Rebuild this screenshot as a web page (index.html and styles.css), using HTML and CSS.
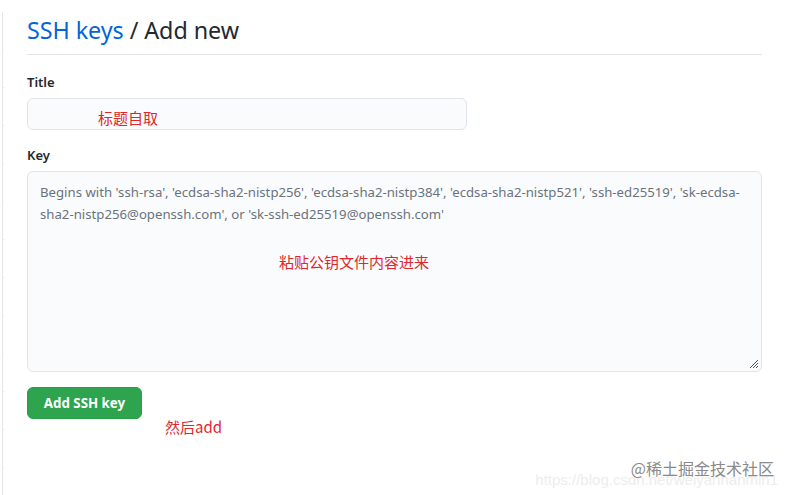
FILE: index.html
```html
<!DOCTYPE html>
<html>
<head>
<meta charset="utf-8">
<link rel="stylesheet" href="styles.css">
</head>
<body>
<div class="rail"></div>
<main class="page">
  <h1 class="heading"><a class="crumb">SSH keys</a> / Add new</h1>
  <form class="form">
    <div class="field">
      <label class="label">Title</label>
      <div class="input"><span class="note note-title">标题自取</span></div>
    </div>
    <div class="field">
      <label class="label">Key</label>
      <div class="textarea">
        <p class="placeholder">Begins with 'ssh-rsa', 'ecdsa-sha2-nistp256', 'ecdsa-sha2-nistp384', 'ecdsa-sha2-nistp521', 'ssh-ed25519', 'sk-ecdsa-sha2-nistp256@openssh.com', or 'sk-ssh-ed25519@openssh.com'</p>
        <p class="note note-key">粘贴公钥文件内容进来</p>
        <svg class="grip" width="10" height="10" viewBox="0 0 10 10"><path d="M9 1L1 9M9 4L4 9M9 7L7 9" stroke="#555" stroke-width="1" fill="none"/></svg>
      </div>
    </div>
    <div class="actions">
      <button type="button" class="btn">Add SSH key</button>
      <span class="note note-add">然后add</span>
    </div>
  </form>
</main>
<div class="watermark">
  <span class="wm-url">https://blog.csdn.net/weiyanhanmin1</span>
  <span class="wm-brand">@稀土掘金技术社区</span>
</div>
</body>
</html>
```
FILE: styles.css
```css
* { box-sizing: border-box; }
html, body { margin: 0; padding: 0; background: #fff; }
body {
  font-family: "Noto Sans", "Noto Sans CJK SC", sans-serif;
  color: #24292e;
  width: 790px;
  height: 495px;
  overflow: hidden;
  position: relative;
}
.rail {
  position: absolute;
  left: 2px;
  top: 12px;
  bottom: 0;
  width: 2px;
  border-left: 1px solid #e6e6e6;
  background: repeating-linear-gradient(to bottom, transparent 0, transparent 37px, #e8e8e8 37px, #e8e8e8 38px);
}
.page {
  padding: 13px 28px 0 27px;
  width: 790px;
}
.heading {
  margin: 0;
  font-size: 23.3px;
  font-weight: 400;
  line-height: 34px;
  padding-bottom: 7px;
  border-bottom: 1px solid #e1e4e8;
  letter-spacing: -0.05px;
}
.crumb { color: #0366d6; }
.form { padding-top: 17px; }
.field { margin-bottom: 15px; }
.label {
  display: block;
  font-size: 13px;
  font-weight: 600;
  line-height: 20px;
  margin-bottom: 6px;
}
.input {
  width: 440px;
  height: 32px;
  background: #fafbfc;
  border: 1px solid #e1e4e8;
  border-radius: 6px;
  padding-left: 70px;
}
.note {
  color: #e0262b;
  font-size: 15px;
  font-family: "Noto Sans CJK SC", sans-serif;
}
.note-title { line-height: 38px; }
.textarea {
  position: relative;
  height: 201px;
  background: #fafbfc;
  border: 1px solid #e1e4e8;
  border-radius: 6px;
  padding: 9px 12px;
}
.placeholder {
  margin: 0;
  font-size: 13.2px;
  line-height: 22px;
  color: #6a737d;
}
.note-key { margin: 26px 0 0 239px; line-height: 22px; }
.grip { position: absolute; right: 2px; bottom: 2px; }
.actions {
  display: flex;
  align-items: flex-start;
}
.btn {
  width: 115px;
  height: 32px;
  background: #2ea44f;
  border: 1px solid #28a045;
  border-radius: 6px;
  color: #fff;
  font-family: "Noto Sans", sans-serif;
  font-size: 13.3px;
  font-weight: 700;
  padding: 0;
}
.note-add { margin: 30px 0 0 23px; line-height: 20px; }
.watermark {
  position: absolute;
  right: 12px;
  top: 456px;
  width: 240px;
  height: 36px;
}
.wm-url {
  position: absolute;
  right: 0;
  top: 15px;
  font-family: "Liberation Sans", sans-serif;
  font-size: 15px;
  color: #ededed;
  white-space: nowrap;
}
.wm-brand {
  position: absolute;
  right: 4px;
  top: 0;
  font-family: "Noto Sans CJK SC", sans-serif;
  font-size: 16px;
  color: #8a8a8a;
  white-space: nowrap;
}
```
